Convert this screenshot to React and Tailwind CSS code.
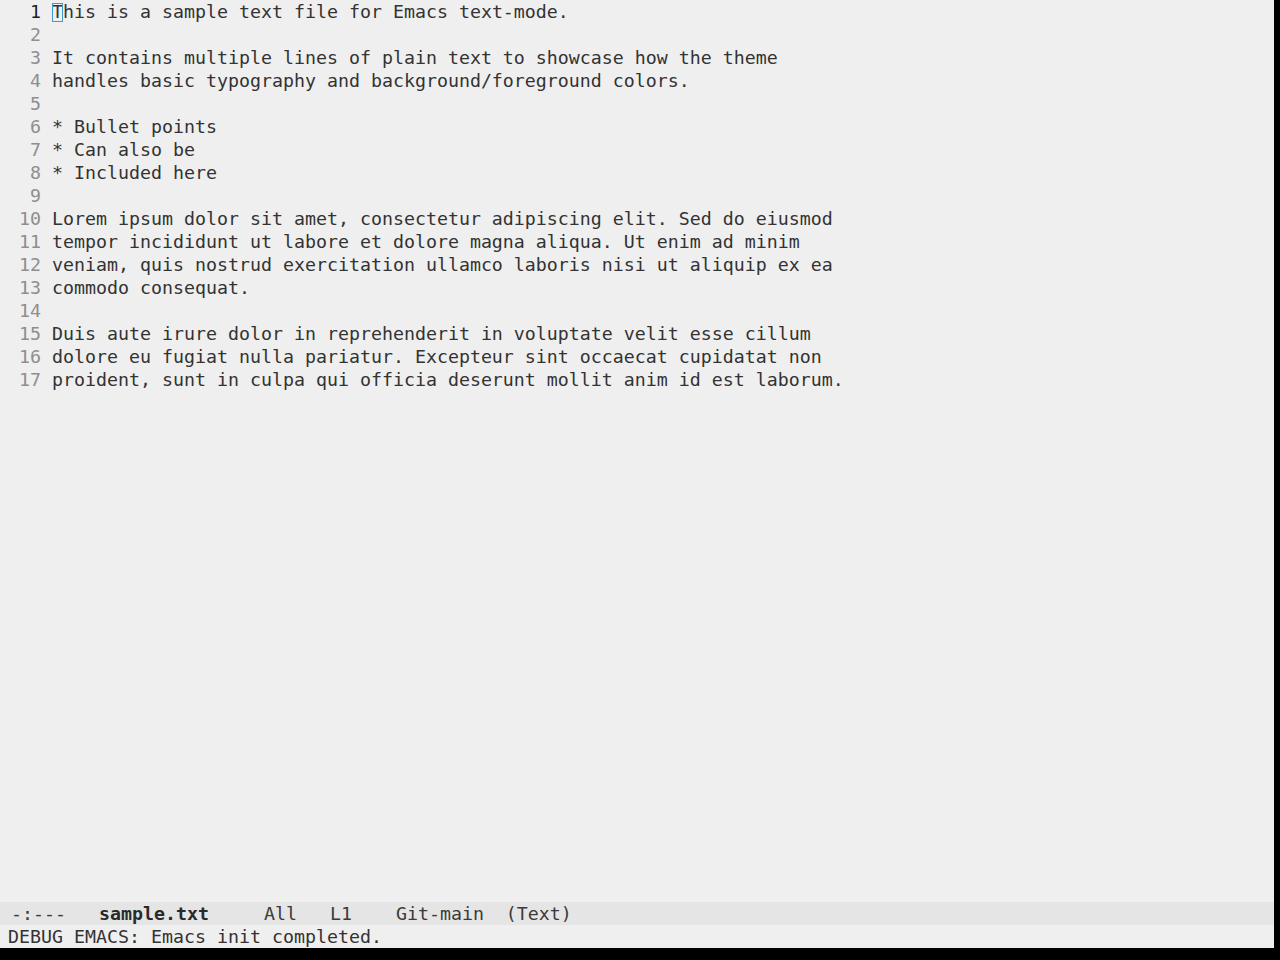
const LINES = [
  'This is a sample text file for Emacs text-mode.',
  '',
  'It contains multiple lines of plain text to showcase how the theme',
  'handles basic typography and background/foreground colors.',
  '',
  '* Bullet points',
  '* Can also be',
  '* Included here',
  '',
  'Lorem ipsum dolor sit amet, consectetur adipiscing elit. Sed do eiusmod',
  'tempor incididunt ut labore et dolore magna aliqua. Ut enim ad minim',
  'veniam, quis nostrud exercitation ullamco laboris nisi ut aliquip ex ea',
  'commodo consequat.',
  '',
  'Duis aute irure dolor in reprehenderit in voluptate velit esse cillum',
  'dolore eu fugiat nulla pariatur. Excepteur sint occaecat cupidatat non',
  'proident, sunt in culpa qui officia deserunt mollit anim id est laborum.',
]

const MONO = "font-['DejaVu_Sans_Mono',monospace] text-[18.27px] leading-[23px]"

function Line({ n, text }) {
  const current = n === 1
  return (
    <div className="flex h-[23px]">
      <div
        className={`w-[52px] shrink-0 pr-[11px] text-right ${current ? 'text-[#1e1e1e]' : 'text-[#8e8e8e]'}`}
      >
        {n}
      </div>
      <div className="whitespace-pre text-[#333333]">
        {current ? (
          <>
            <span className="relative">
              T
              <span className="absolute left-0 top-[2px] h-[19px] w-[11px] border border-[#3b9ccc]" />
            </span>
            {text.slice(1)}
          </>
        ) : (
          text
        )}
      </div>
    </div>
  )
}

export default function App() {
  return (
    <div className="h-[960px] w-[1280px] overflow-hidden bg-black">
      <div className={`flex h-[948px] w-[1274px] flex-col bg-[#efefef] ${MONO}`}>
        <div className="flex-1">
          {LINES.map((t, i) => (
            <Line key={i} n={i + 1} text={t} />
          ))}
        </div>

        {/* mode line */}
        <div className="h-[23px] whitespace-pre bg-[#e5e5e5] text-[#3a3a3a]">
          {' -:---   '}
          <span className="font-bold text-[#2a2a2a]">sample.txt</span>
          {'     All   L1    Git-main  (Text)'}
        </div>

        {/* echo area */}
        <div className="h-[23px] whitespace-pre pl-[8px] text-[#333333]">
          DEBUG EMACS: Emacs init completed.
        </div>
      </div>
    </div>
  )
}
